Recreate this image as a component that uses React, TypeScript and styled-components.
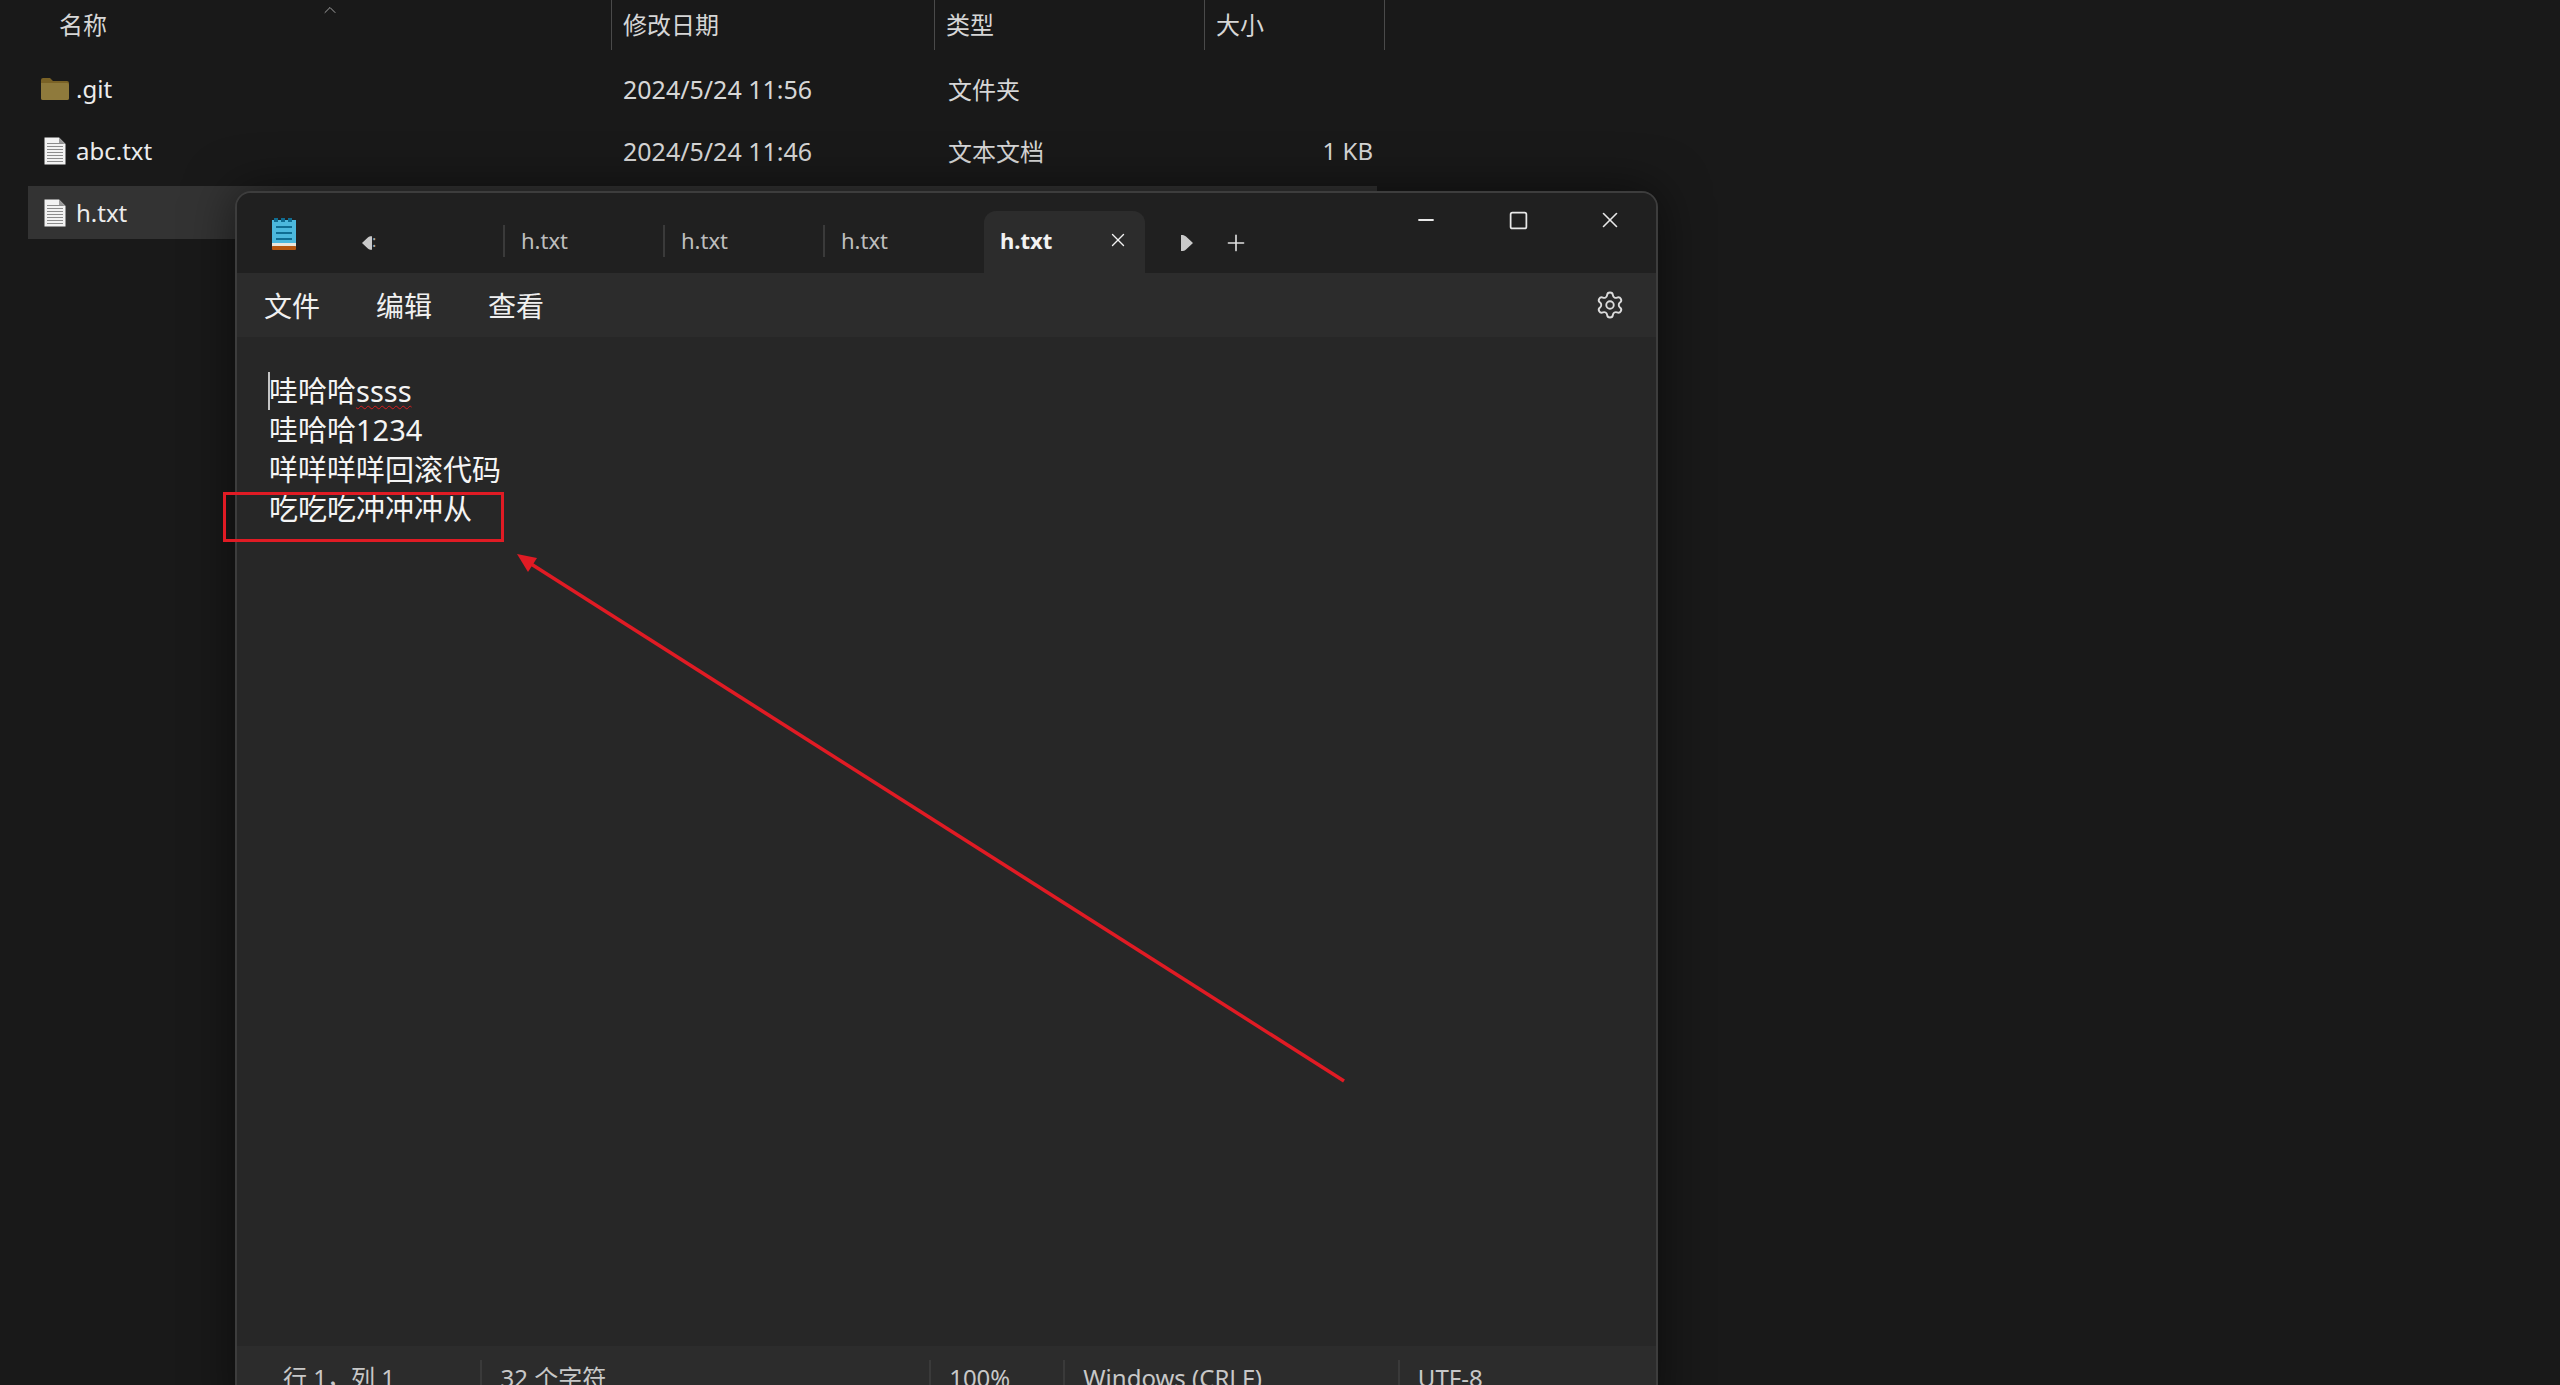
import React from 'react';
import styled, {createGlobalStyle} from 'styled-components';
import {ChevronUp, Minus, Plus, Settings, Square, X} from 'lucide-react';

const FONT = '"Noto Sans", "Noto Sans CJK SC", sans-serif';

const GlobalStyle = createGlobalStyle`
  html, body {
    margin: 0;
    height: 100%;
    overflow: hidden;
    background: #191919;
  }
  * {
    box-sizing: border-box;
  }
`;

type FileRow = {
    name: string;
    date: string;
    kind: string;
    size?: string;
    folder?: boolean;
    selected?: boolean;
};

const FILES: FileRow[] = [
    {name: '.git', date: '2024/5/24 11:56', kind: '文件夹', folder: true},
    {name: 'abc.txt', date: '2024/5/24 11:46', kind: '文本文档', size: '1 KB'},
    {name: 'h.txt', date: '2024/5/24 11:46', kind: '文本文档', size: '1 KB', selected: true},
];

const FileIcon = () => (
    <svg width='22' height='28' viewBox='0 0 22 28'>
        <path d='M0.5 0.5H15L21.5 7V27.5H0.5Z' fill='#f2f2f2'/>
        <path d='M15 0.5V7H21.5Z' fill='#9a9a9a'/>
        {[6, 9, 12, 15, 18, 21, 24].map((y) => (
            <rect
                key={y}
                x='3'
                y={y}
                width='16'
                height='1'
                fill='#8c8c8c'
            />
        ))}
    </svg>
);

const FolderIcon = () => (
    <svg width='28' height='22' viewBox='0 0 28 22'>
        <path d='M0 2a2 2 0 0 1 2-2h7l3 3h14a2 2 0 0 1 2 2v15a2 2 0 0 1-2 2H2a2 2 0 0 1-2-2Z' fill='#7a6226'/>
        <path d='M0 5h26a2 2 0 0 1 2 2v13a2 2 0 0 1-2 2H2a2 2 0 0 1-2-2Z' fill='#8f7a3c'/>
    </svg>
);

const NotepadIcon = () => (
    <svg width='24' height='32' viewBox='0 0 24 32'>
        <rect x='0' y='2' width='24' height='27' fill='#4cb8dc'/>
        <rect x='0' y='25' width='24' height='3' fill='#e9e6dc'/>
        <rect x='0' y='28' width='24' height='4' rx='1' fill='#b5560f'/>
        {[2, 9, 16].map((x) => (
            <rect
                key={x}
                x={x}
                y='0'
                width='4'
                height='4'
                fill='#0f6d92'
            />
        ))}
        {[8, 14, 20].map((y) => (
            <rect
                key={y}
                x='4'
                y={y}
                width='16'
                height='2'
                fill='#0f6d92'
            />
        ))}
    </svg>
);

const Triangle = ({flip}: {flip?: boolean}) => (
    <svg width='12' height='16' viewBox='0 0 12 16' style={{transform: flip ? 'scaleX(-1)' : undefined}}>
        <path d='M0 8 7 1.5Q8 0.5 10 0H12V16H10Q8 15.5 7 14.5Z' fill='#c9c9c9'/>
    </svg>
);

export default function App() {
    return (
        <Page>
            <GlobalStyle/>
            <Explorer>
                <HeaderRow>
                    <HeaderCell $first>
                        名称
                        <SortCaret><ChevronUp size={20} strokeWidth={1}/></SortCaret>
                    </HeaderCell>
                    <HeaderCell>修改日期</HeaderCell>
                    <HeaderCell>类型</HeaderCell>
                    <HeaderCell>大小</HeaderCell>
                </HeaderRow>
                {FILES.map((file) => (
                    <Row key={file.name} $selected={file.selected}>
                        <NameCell>
                            <IconSlot>{file.folder ? <FolderIcon/> : <FileIcon/>}</IconSlot>
                            {file.name}
                        </NameCell>
                        <DateCell>{file.date}</DateCell>
                        <KindCell>{file.kind}</KindCell>
                        <SizeCell>{file.size}</SizeCell>
                    </Row>
                ))}
            </Explorer>

            <Window>
                <TabBar>
                    <AppIcon><NotepadIcon/></AppIcon>
                    <ScrollLeft><Triangle/></ScrollLeft>
                    <ClippedTab><Dots>:</Dots></ClippedTab>
                    <Tab>h.txt</Tab>
                    <Tab>h.txt</Tab>
                    <Tab>h.txt</Tab>
                    <ActiveTab>
                        h.txt
                        <X size={22} strokeWidth={1.5}/>
                    </ActiveTab>
                    <ScrollRight><Triangle flip/></ScrollRight>
                    <AddTab><Plus size={26} strokeWidth={1.5}/></AddTab>
                    <WindowControls>
                        <ControlButton><Minus size={24} strokeWidth={1.8}/></ControlButton>
                        <ControlButton><Square size={21} strokeWidth={2}/></ControlButton>
                        <ControlButton><X size={26} strokeWidth={1.5}/></ControlButton>
                    </WindowControls>
                </TabBar>
                <MenuBar>
                    <MenuItem>文件</MenuItem>
                    <MenuItem>编辑</MenuItem>
                    <MenuItem>查看</MenuItem>
                    <GearButton><Settings size={30} strokeWidth={1.5}/></GearButton>
                </MenuBar>
                <Editor>
                    <Line>
                        <Caret/>
                        哇哈哈<Misspelled>ssss</Misspelled>
                    </Line>
                    <Line>哇哈哈1234</Line>
                    <Line>咩咩咩咩回滚代码</Line>
                    <Line>吃吃吃冲冲冲从</Line>
                </Editor>
                <StatusBar>
                    <StatusCell $width={209}>行 1，列 1</StatusCell>
                    <StatusCell $width={452}>32 个字符</StatusCell>
                    <StatusCell $width={135}>100%</StatusCell>
                    <StatusCell $width={337}>Windows (CRLF)</StatusCell>
                    <StatusCell $width={260}>UTF-8</StatusCell>
                </StatusBar>
            </Window>

            <Highlight/>
            <Arrow viewBox='0 0 2560 1385'>
                <line x1='1344' y1='1081' x2='528' y2='562' stroke='#e01b24' strokeWidth='3.5'/>
                <polygon points='517,554 537,558 528,572' fill='#e01b24'/>
            </Arrow>
        </Page>
    );
}

const Page = styled.div`
  position: relative;
  width: 2560px;
  height: 1385px;
  overflow: hidden;
  background: #191919;
  font-family: ${FONT};
  color: #e4e4e4;
`;

const Explorer = styled.div`
  display: flex;
  flex-direction: column;
  width: 1385px;
`;

const HeaderRow = styled.div`
  display: grid;
  grid-template-columns: 612px 323px 270px 180px;
  height: 50px;
  margin-bottom: 12px;
`;

const HeaderCell = styled.div<{$first?: boolean}>`
  position: relative;
  display: flex;
  align-items: center;
  padding-left: ${(p) => (p.$first ? '59px' : '11px')};
  padding-bottom: 4px;
  font-size: 24px;
  color: #d6d6d6;
  border-right: 1px solid #4a4a4a;
`;

const SortCaret = styled.span`
  position: absolute;
  left: 320px;
  top: -6px;
  color: #bdbdbd;
`;

const Row = styled.div<{$selected?: boolean}>`
  display: grid;
  grid-template-columns: 612px 323px 270px 180px;
  align-items: center;
  height: 53px;
  margin: 0 8px 9px 28px;
  margin-right: 8px;
  margin-left: 28px;
  grid-template-columns: 584px 323px 270px 172px;
  font-size: 24px;
  background: ${(p) => (p.$selected ? '#333333' : 'transparent')};
`;

const NameCell = styled.div`
  display: flex;
  align-items: center;
  font-size: 24px;
  color: #ececec;
`;

const IconSlot = styled.span`
  display: flex;
  justify-content: center;
  width: 48px;
  padding-left: 6px;
`;

const DateCell = styled.div`
  padding-left: 11px;
  font-size: 25px;
  color: #d6d6d6;
`;

const KindCell = styled.div`
  padding-left: 13px;
  color: #d6d6d6;
`;

const SizeCell = styled.div`
  padding-right: 4px;
  text-align: right;
  color: #d6d6d6;
`;

const Window = styled.div`
  position: absolute;
  left: 235px;
  top: 191px;
  width: 1423px;
  height: 1230px;
  display: flex;
  flex-direction: column;
  border: 2px solid #3d3d3d;
  border-radius: 16px;
  overflow: hidden;
  background: #272727;
  box-shadow: 0 0 50px rgba(0, 0, 0, 0.55);
`;

const TabBar = styled.div`
  position: relative;
  display: flex;
  align-items: flex-end;
  height: 80px;
  flex: none;
  background: #202020;
`;

const AppIcon = styled.div`
  display: flex;
  align-items: center;
  width: 85px;
  height: 48px;
  padding-left: 35px;
  margin-bottom: 15px;
`;

const ScrollLeft = styled.div`
  display: flex;
  align-items: center;
  width: 50px;
  height: 48px;
  padding-left: 37px;
  margin-bottom: 6px;
  box-sizing: content-box;
  padding-left: 40px;
  width: 10px;
`;

const ClippedTab = styled.div`
  width: 131px;
  height: 32px;
  margin-bottom: 16px;
  color: #aaaaaa;
  font-size: 16px;
  line-height: 32px;
`;

const Dots = styled.span`
  padding-left: 0;
`;

const Tab = styled.div`
  width: 160px;
  height: 32px;
  margin-bottom: 16px;
  padding-left: 16px;
  border-left: 2px solid #3a3a3a;
  font-size: 22px;
  line-height: 30px;
  color: #bdbdbd;
`;

const ActiveTab = styled.div`
  display: flex;
  align-items: center;
  justify-content: space-between;
  width: 161px;
  height: 62px;
  padding: 0 16px 4px 16px;
  margin-left: 1px;
  border-radius: 12px 12px 0 0;
  background: #2c2c2c;
  font-size: 22px;
  font-weight: 700;
  color: #f2f2f2;
`;

const ScrollRight = styled.div`
  display: flex;
  align-items: center;
  width: 72px;
  height: 48px;
  padding-left: 36px;
  margin-bottom: 6px;
`;

const AddTab = styled.div`
  display: flex;
  align-items: center;
  height: 48px;
  margin-bottom: 6px;
  padding-left: 6px;
  color: #e0e0e0;
`;

const WindowControls = styled.div`
  position: absolute;
  right: 0;
  top: 0;
  display: flex;
  color: #e8e8e8;
`;

const ControlButton = styled.div`
  display: flex;
  align-items: center;
  justify-content: center;
  width: 92px;
  height: 54px;
`;

const MenuBar = styled.div`
  display: flex;
  align-items: center;
  flex: none;
  height: 64px;
  padding: 0 16px 0 27px;
  gap: 56px;
  background: #2c2c2c;
`;

const MenuItem = styled.div`
  font-size: 28px;
  color: #f0f0f0;
`;

const GearButton = styled.div`
  display: flex;
  margin-left: auto;
  margin-right: 15px;
  color: #dcdcdc;
`;

const Editor = styled.div`
  flex: 1;
  padding: 34px 0 0 32px;
  background: #272727;
  font-size: 29px;
  color: #f4f4f4;
`;

const Line = styled.div`
  position: relative;
  height: 39.3px;
  line-height: 39px;
  white-space: nowrap;
`;

const Caret = styled.span`
  position: absolute;
  left: -1px;
  top: 1px;
  width: 2px;
  height: 38px;
  background: #c4c4c4;
`;

const Misspelled = styled.span`
  text-decoration: underline wavy #d81e1e 1px;
  text-underline-offset: 3px;
`;

const StatusBar = styled.div`
  display: flex;
  flex: none;
  align-items: flex-start;
  height: 73px;
  padding: 14px 0 0 36px;
  background: #2c2c2c;
`;

const StatusCell = styled.div<{$width: number}>`
  width: ${(p) => p.$width}px;
  height: 40px;
  padding-left: 18px;
  font-size: 24px;
  line-height: 36px;
  color: #c8c8c8;
  border-left: 2px solid #3a3a3a;

  &:first-child {
    padding-left: 10px;
    border-left: none;
  }
`;

const Highlight = styled.div`
  position: absolute;
  left: 223px;
  top: 492px;
  width: 281px;
  height: 50px;
  border: 3px solid #e01b24;
`;

const Arrow = styled.svg`
  position: absolute;
  left: 0;
  top: 0;
  width: 2560px;
  height: 1385px;
  pointer-events: none;
`;
